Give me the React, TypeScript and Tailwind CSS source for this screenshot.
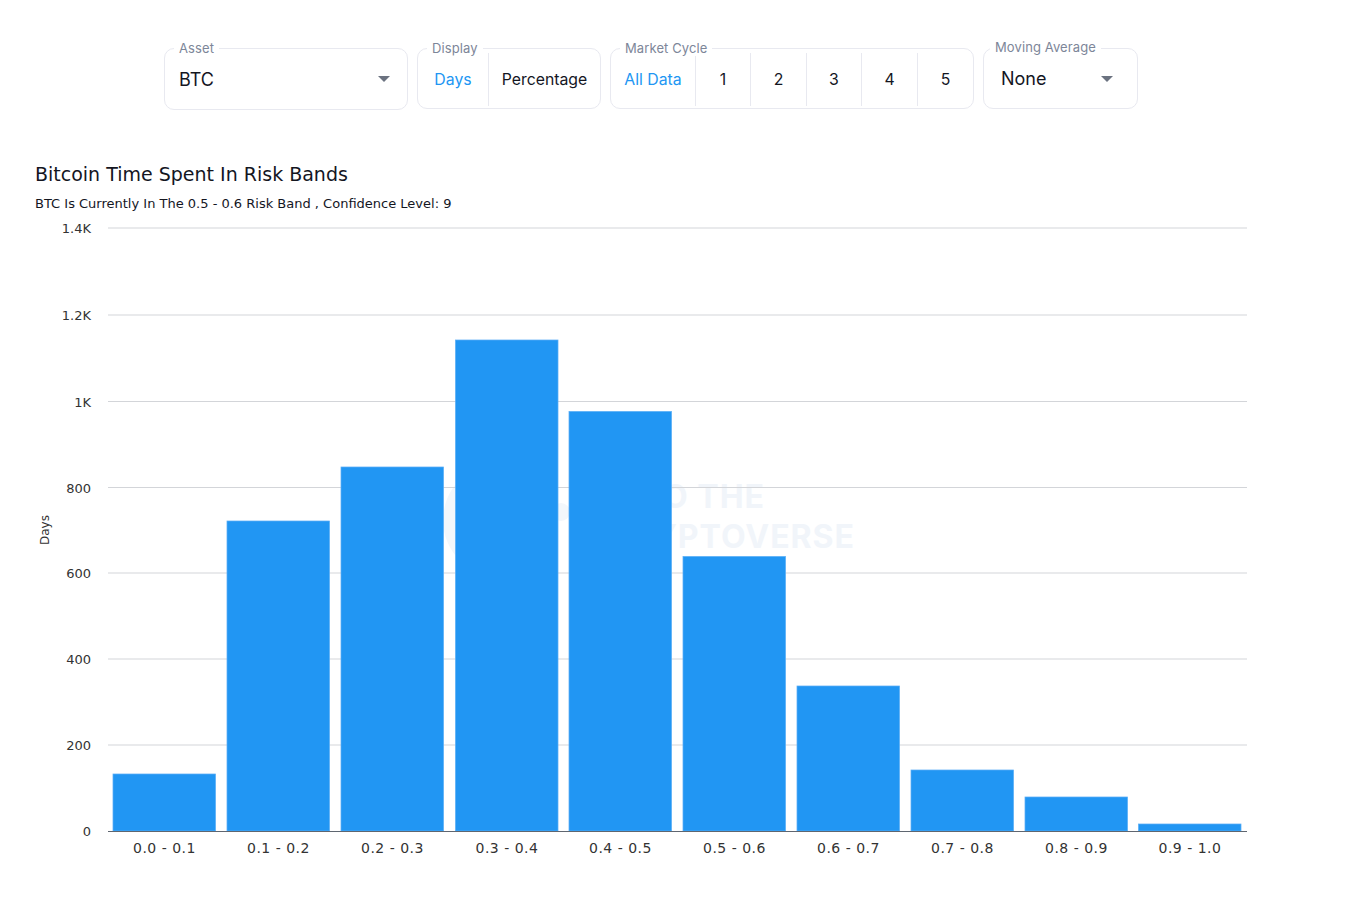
const ff = "font-['Inter','Liberation_Sans',sans-serif]";

const bars = [
  { label: "0.0 - 0.1", x: 113, top: 774 },
  { label: "0.1 - 0.2", x: 227, top: 521 },
  { label: "0.2 - 0.3", x: 341, top: 467 },
  { label: "0.3 - 0.4", x: 455.5, top: 340 },
  { label: "0.4 - 0.5", x: 569, top: 411.5 },
  { label: "0.5 - 0.6", x: 683, top: 556.5 },
  { label: "0.6 - 0.7", x: 797, top: 686 },
  { label: "0.7 - 0.8", x: 911, top: 770 },
  { label: "0.8 - 0.9", x: 1025, top: 797 },
  { label: "0.9 - 1.0", x: 1138.5, top: 824 },
];

const ticks = [
  { label: "1.4K", y: 228 },
  { label: "1.2K", y: 315 },
  { label: "1K", y: 401.5 },
  { label: "800", y: 487.5 },
  { label: "600", y: 573 },
  { label: "400", y: 659 },
  { label: "200", y: 745 },
];

function Group({ label, className, labelClass, children }: { label: string; className: string; labelClass?: string; children: React.ReactNode }) {
  return (
    <div className={`relative flex border border-[#e8e9f0] rounded-[10px] bg-white ${className}`}>
      <span className={`absolute bg-white px-[5px] text-[13px] leading-[16px] text-[#7d8699] tracking-[0.1px] ${labelClass ?? "left-[9px] top-[-9px]"}`}>
        {label}
      </span>
      {children}
    </div>
  );
}

function Caret() {
  return (
    <svg width="12" height="6" viewBox="0 0 12 6" className="block">
      <path d="M0 0h12L6 6z" fill="#6b7280" />
    </svg>
  );
}

function Segment({ text, active, width, last }: { text: string; active?: boolean; width: string; last?: boolean }) {
  return (
    <div className={`flex items-center justify-center text-[15.8px] mt-[4px] mb-[2px] pt-[1px] ${width} ${last ? "" : "border-r border-[#e8e9f0]"} ${active ? "text-[#2196f3]" : "text-[#14161f]"}`}>
      {text}
    </div>
  );
}

export default function App() {
  return (
    <div className={`w-[1364px] h-[912px] bg-white overflow-hidden pt-[48px] ${ff}`}>
      <div className="flex items-start gap-[9px] pl-[164px]">
        <Group label="Asset" className="w-[244px] h-[62px] items-center justify-between pl-[14px] pr-[17px]">
          <span className="text-[18px] text-[#14161f]">BTC</span>
          <Caret />
        </Group>
        <Group label="Display" className="w-[184px] h-[61px]">
          <Segment text="Days" active width="w-[71px]" />
          <Segment text="Percentage" width="flex-1" last />
        </Group>
        <Group label="Market Cycle" className="w-[364px] h-[61px]">
          <Segment text="All Data" active width="w-[85px]" />
          <Segment text="1" width="w-[55px]" />
          <Segment text="2" width="w-[56px]" />
          <Segment text="3" width="w-[55px]" />
          <Segment text="4" width="w-[56px]" />
          <Segment text="5" width="flex-1" last />
        </Group>
        <Group label="Moving Average" labelClass="left-[6px] top-[-10px]" className="w-[155px] h-[61px] items-center justify-between pl-[17px] pr-[24px]">
          <span className="text-[18px] text-[#14161f]">None</span>
          <Caret />
        </Group>
      </div>

      <div className="pl-[35px] mt-[50px] font-['DejaVu_Sans',sans-serif] text-[#14161f]">
        <h1 className="text-[19px] leading-[28px] font-normal">Bitcoin Time Spent In Risk Bands</h1>
        <p className="text-[13px] leading-[16px] mt-[8px]">BTC Is Currently In The 0.5 - 0.6 Risk Band , Confidence Level: 9</p>
      </div>

      <svg width="1364" height="680" viewBox="0 212 1364 680" className="block font-['DejaVu_Sans',sans-serif]">
        {/* watermark, mostly hidden behind the bars */}
        <circle cx="500" cy="520" r="57" fill="#f3f7fb" />
        <circle cx="561" cy="512" r="9" fill="#f3f7fb" />
        <text x="765" y="508" textAnchor="end" fontSize="32" fontWeight="700" letterSpacing="1" fill="#f1f5fa" className={ff}>INTO THE</text>
        <text x="855" y="548" textAnchor="end" fontSize="32" fontWeight="700" letterSpacing="1" fill="#f1f5fa" className={ff}>CRYPTOVERSE</text>
        {ticks.map((t) => (
          <g key={t.label}>
            <line x1="108" x2="1247" y1={t.y} y2={t.y} stroke="#d3d5d9" strokeWidth="1" />
            <text x="91" y={t.y + 5} textAnchor="end" fontSize="13" fill="#333">{t.label}</text>
          </g>
        ))}
        {bars.map((b) => (
          <g key={b.label}>
            <rect x={b.x} y={b.top} width="102.5" height={831 - b.top} fill="#2196f3" stroke="#5aaef6" strokeWidth="0.75" />
            <text x={b.x + 51.5} y="853" textAnchor="middle" fontSize="14" letterSpacing="0.5" fill="#333">{b.label}</text>
          </g>
        ))}
        <line x1="108" x2="1247" y1="831.5" y2="831.5" stroke="#5f6670" strokeWidth="1" />
        <text x="91" y="836" textAnchor="end" fontSize="13" fill="#333">0</text>
        <text x="0" y="0" transform="translate(49 545) rotate(-90)" fontSize="12" textAnchor="start" fill="#333">Days</text>
      </svg>
    </div>
  );
}
